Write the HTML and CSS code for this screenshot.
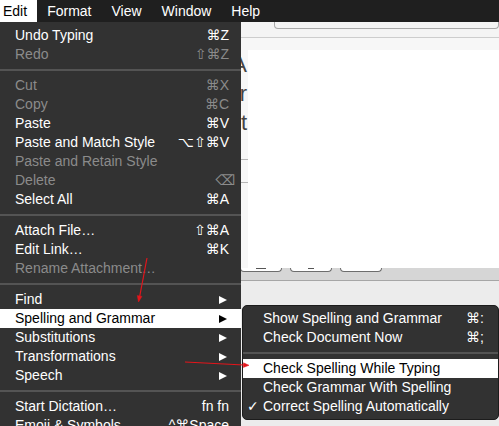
FILE: index.html
```html
<!DOCTYPE html>
<html lang="en">
<head>
    <meta charset="UTF-8">
    <title>Edit Menu</title>
    <link rel="stylesheet" href="styles.css">
</head>
<body>

<div class="menubar">
    <span class="title open">Edit</span>
    <span class="title">Format</span>
    <span class="title">View</span>
    <span class="title">Window</span>
    <span class="title">Help</span>
</div>

<!-- window behind the menu -->
<div class="window">
    <div class="toolbar"><div class="field"></div></div>
    <div class="doc">
        <div class="gutter">
            <p>A</p>
            <p>r</p>
            <p>t</p>
            <div class="rule"></div>
            <div class="rule"></div>
        </div>
        <div class="page"></div>
    </div>
    <div class="buttonbar">
        <span class="btn"><i></i></span>
        <span class="btn"><i class="short"></i></span>
        <span class="btn"></span>
    </div>
    <div class="footer"></div>
</div>

<div class="menu">
    <div class="item">Undo Typing <span class="key">⌘Z</span></div>
    <div class="item off">Redo <span class="key">⇧⌘Z</span></div>
    <div class="sep"></div>
    <div class="item off">Cut <span class="key">⌘X</span></div>
    <div class="item off">Copy <span class="key">⌘C</span></div>
    <div class="item">Paste <span class="key">⌘V</span></div>
    <div class="item">Paste and Match Style <span class="key">⌥⇧⌘V</span></div>
    <div class="item off">Paste and Retain Style</div>
    <div class="item off">Delete <span class="key del">⌫</span></div>
    <div class="item">Select All <span class="key">⌘A</span></div>
    <div class="sep"></div>
    <div class="item">Attach File… <span class="key">⇧⌘A</span></div>
    <div class="item">Edit Link… <span class="key">⌘K</span></div>
    <div class="item off">Rename Attachment…</div>
    <div class="sep"></div>
    <div class="item">Find <span class="arrow"></span></div>
    <div class="item active">Spelling and Grammar <span class="arrow"></span></div>
    <div class="item">Substitutions <span class="arrow"></span></div>
    <div class="item">Transformations <span class="arrow"></span></div>
    <div class="item">Speech <span class="arrow"></span></div>
    <div class="sep"></div>
    <div class="item">Start Dictation… <span class="key">fn fn</span></div>
    <div class="item">Emoji &amp; Symbols <span class="key">^⌘Space</span></div>
</div>

<div class="submenu">
    <div class="item"><span><span class="mark"></span>Show Spelling and Grammar</span> <span class="key">⌘:</span></div>
    <div class="item"><span><span class="mark"></span>Check Document Now</span> <span class="key">⌘;</span></div>
    <div class="sep"></div>
    <div class="item active"><span><span class="mark"></span>Check Spelling While Typing</span></div>
    <div class="item"><span><span class="mark"></span>Check Grammar With Spelling</span></div>
    <div class="item"><span><span class="mark">✓</span>Correct Spelling Automatically</span></div>
</div>

<!-- red annotation arrows drawn over the screenshot -->
<svg class="marks" width="499" height="426" viewBox="0 0 499 426">
    <g stroke="#e3151b" stroke-width="1.2" fill="#e3151b">
        <line x1="147" y1="258" x2="139.6" y2="297"/>
        <polygon points="138.5,302 137.3,295.6 141.9,296.4" stroke-width="0.5"/>
        <line x1="185" y1="362" x2="244" y2="365"/>
        <polygon points="249,365.3 243.5,362.8 243.3,367.4" stroke-width="0.5"/>
    </g>
</svg>

</body>
</html>
```

FILE: styles.css
```css
body {
    margin: 0;
    width: 499px;
    height: 426px;
    overflow: hidden;
    position: relative;
    background: #ececec;
    font-family: "Liberation Sans", "DejaVu Sans", sans-serif;
    font-size: 14px;
}

/* top menu bar */
.menubar {
    display: flex;
    height: 22px;
    background: #1f1f1f;
    color: #fff;
    line-height: 22px;
}
.menubar .title {
    padding: 0 10px;
}
.menubar .open {
    margin-left: -7px;
    background: #fff;
    color: #000;
}

/* background window */
.window {
    display: flex;
    flex-direction: column;
    height: 404px;
}
.toolbar {
    display: flex;
    height: 15px;
    background: #f4f4f4;
    border-bottom: 1px solid #cdcdcd;
}
.field {
    flex: 1;
    height: 6px;
    margin-left: 274px;
    border: 1px solid #a9a9a9;
    border-top: none;
    border-radius: 0 0 4px 4px;
}
.doc {
    display: flex;
    height: 230px;
    background: #f7f7f7;
}
.gutter {
    width: 248px;
    padding-top: 12px;
    text-align: right;
    font-size: 22px;
    line-height: 29px;
    color: #444;
}
.gutter p {
    margin: 0;
    padding-right: 1px;
}
.rule {
    height: 1px;
    margin-top: 22px;
    background: #b5b5b5;
}
.page {
    flex: 1;
    margin-top: 12px;
    background: #fff;
}
.buttonbar {
    display: flex;
    gap: 8px;
    height: 12px;
    padding-left: 240px;
    background: #d6d6d6;
    border-bottom: 1px solid #a6a6a6;
}
.btn {
    display: flex;
    justify-content: center;
    width: 40px;
    height: 3px;
    background: #fff;
    border: 1px solid #6d6d6d;
    border-top: none;
    border-radius: 0 0 4px 4px;
}
.btn i {
    width: 10px;
    height: 1px;
    background: #555;
}
.btn i.short {
    width: 6px;
}
.footer {
    flex: 1;
    background: #ececec;
}

/* dropdown menus */
.menu, .submenu {
    position: absolute;
    background: #323232;
    color: #fff;
}
.menu {
    top: 22px;
    left: 0;
    width: 241px;
    height: 420px;
    padding-top: 4px;
}
.submenu {
    top: 305px;
    left: 242px;
    width: 255px;
    padding: 3px 0;
    border: 1px solid #1c1c1c;
    border-radius: 5px;
    overflow: hidden;
}
.item {
    display: flex;
    justify-content: space-between;
    align-items: center;
    height: 19px;
    padding: 0 12px 0 15px;
    line-height: 19px;
    white-space: nowrap;
}
.submenu .item {
    padding: 0 14px 0 4px;
}
.item.off {
    color: #8b8b8b;
}
.item.active {
    background: #fff;
    color: #000;
}
.key.del {
    margin-right: -6px;
}
.mark {
    display: inline-block;
    width: 16px;
    font-family: "DejaVu Sans", sans-serif;
}
.arrow {
    width: 0;
    height: 0;
    margin-right: 2px;
    border-left: 8px solid #fff;
    border-top: 4.5px solid transparent;
    border-bottom: 4.5px solid transparent;
}
.active .arrow {
    border-left-color: #000;
}
.sep {
    height: 2px;
    margin: 5px 0;
    background: #545454;
}

.marks {
    position: absolute;
    top: 0;
    left: 0;
    pointer-events: none;
}
```
